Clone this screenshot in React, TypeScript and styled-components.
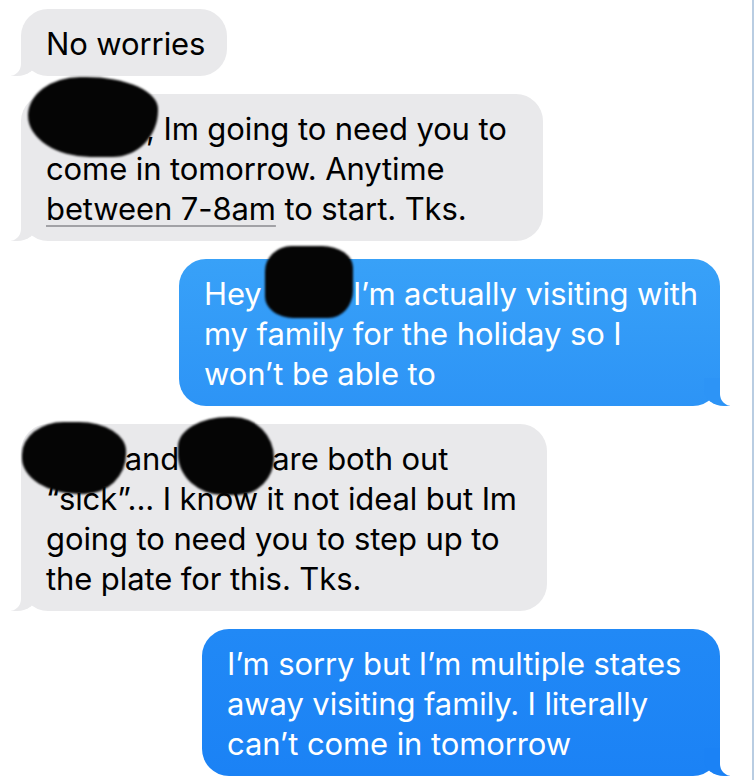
import React from "react";
import styled, { createGlobalStyle } from "styled-components";

const Global = createGlobalStyle`
  html, body { margin: 0; padding: 0; background: #ffffff; }
  body { font-family: "Inter", "Noto Sans", sans-serif; -webkit-font-smoothing: antialiased; }
`;

const Screen = styled.div`
  box-sizing: border-box;
  width: 754px;
  height: 780px;
  border-right: 2px solid #b9cde2;
  padding-top: 9px;
  display: flex;
  flex-direction: column;
  gap: 18px;
  overflow: hidden;
`;

const Bubble = styled.div<{ $me?: boolean; $w: number; $bg: string; $tail: string }>`
  position: relative;
  box-sizing: border-box;
  width: ${(p) => p.$w}px;
  padding: 15px 20px 12px 25px;
  border-radius: 27px;
  background: ${(p) => p.$bg};
  color: ${(p) => (p.$me ? "#ffffff" : "#000000")};
  font-size: 31px;
  line-height: 40px;
  letter-spacing: -0.1px;
  white-space: nowrap;
  align-self: ${(p) => (p.$me ? "flex-end" : "flex-start")};
  margin: ${(p) => (p.$me ? "0 32px 0 0" : "0 0 0 21px")};

  &::before {
    content: "";
    position: absolute;
    bottom: 0;
    width: 26px;
    height: 28px;
    background: ${(p) => p.$tail};
    ${(p) =>
      p.$me
        ? "right: -10px; border-bottom-left-radius: 20px 16px;"
        : "left: -10px; border-bottom-right-radius: 20px 16px;"}
  }

  &::after {
    content: "";
    position: absolute;
    bottom: 0;
    width: 26px;
    height: 28px;
    background: #ffffff;
    ${(p) =>
      p.$me
        ? "right: -26px; border-bottom-left-radius: 12px;"
        : "left: -26px; border-bottom-right-radius: 12px;"}
  }
`;

const Line = styled.div``;

const Detected = styled.span`
  text-decoration: underline;
  text-decoration-color: #a2a2a6;
  text-decoration-thickness: 1.5px;
  text-underline-offset: 5px;
`;

const Redact = styled.span<{ $w: number }>`
  display: inline-block;
  position: relative;
  width: ${(p) => p.$w}px;
  height: 1em;
  vertical-align: baseline;
`;

const Blob = styled.span<{ $l: number; $t: number; $bw: number; $bh: number; $r: string }>`
  position: absolute;
  z-index: 2;
  left: ${(p) => p.$l}px;
  top: ${(p) => p.$t}px;
  width: ${(p) => p.$bw}px;
  height: ${(p) => p.$bh}px;
  background: #050505;
  border-radius: ${(p) => p.$r};
  filter: blur(1.3px);
`;

const GRAY = "#e9e9eb";

export default function App() {
  return (
    <>
      <Global />
      <Screen>
        <Bubble $w={206} $bg={GRAY} $tail={GRAY}>
          <Line>No worries</Line>
        </Bubble>

        <Bubble $w={522} $bg={GRAY} $tail={GRAY}>
          <Line>
            <Redact $w={100}>
              <Blob $l={-18} $t={-32} $bw={130} $bh={80} $r="40% 55% 35% 48% / 48% 40% 58% 52%" />
            </Redact>
            , Im going to need you to
          </Line>
          <Line>come in tomorrow. Anytime</Line>
          <Line>
            <Detected>between 7-8am</Detected> to start. Tks.
          </Line>
        </Bubble>

        <Bubble $me $w={541} $bg="linear-gradient(180deg, #38a1f8 0%, #2d94f6 100%)" $tail="#2d94f6">
          <Line>
            Hey{" "}
            <Redact $w={74}>
              <Blob $l={-5} $t={-28} $bw={88} $bh={72} $r="30% 35% 28% 32% / 35% 30% 38% 30%" />
            </Redact>{" "}
            I’m actually visiting with
          </Line>
          <Line>my family for the holiday so I</Line>
          <Line>won’t be able to</Line>
        </Bubble>

        <Bubble $w={526} $bg={GRAY} $tail={GRAY}>
          <Line>
            <Redact $w={70}>
              <Blob $l={-24} $t={-17} $bw={104} $bh={72} $r="40% 45% 40% 55% / 45% 40% 55% 50%" />
            </Redact>{" "}
            and{" "}
            <Redact $w={76}>
              <Blob $l={-10} $t={-22} $bw={96} $bh={78} $r="55% 45% 40% 50% / 40% 55% 50% 55%" />
            </Redact>{" "}
            are both out
          </Line>
          <Line>“sick”... I know it not ideal but Im</Line>
          <Line>going to need you to step up to</Line>
          <Line>the plate for this. Tks.</Line>
        </Bubble>

        <Bubble $me $w={518} $bg="linear-gradient(180deg, #2189f6 0%, #1b82f5 100%)" $tail="#1b82f5">
          <Line>I’m sorry but I’m multiple states</Line>
          <Line>away visiting family. I literally</Line>
          <Line>can’t come in tomorrow</Line>
        </Bubble>
      </Screen>
    </>
  );
}
